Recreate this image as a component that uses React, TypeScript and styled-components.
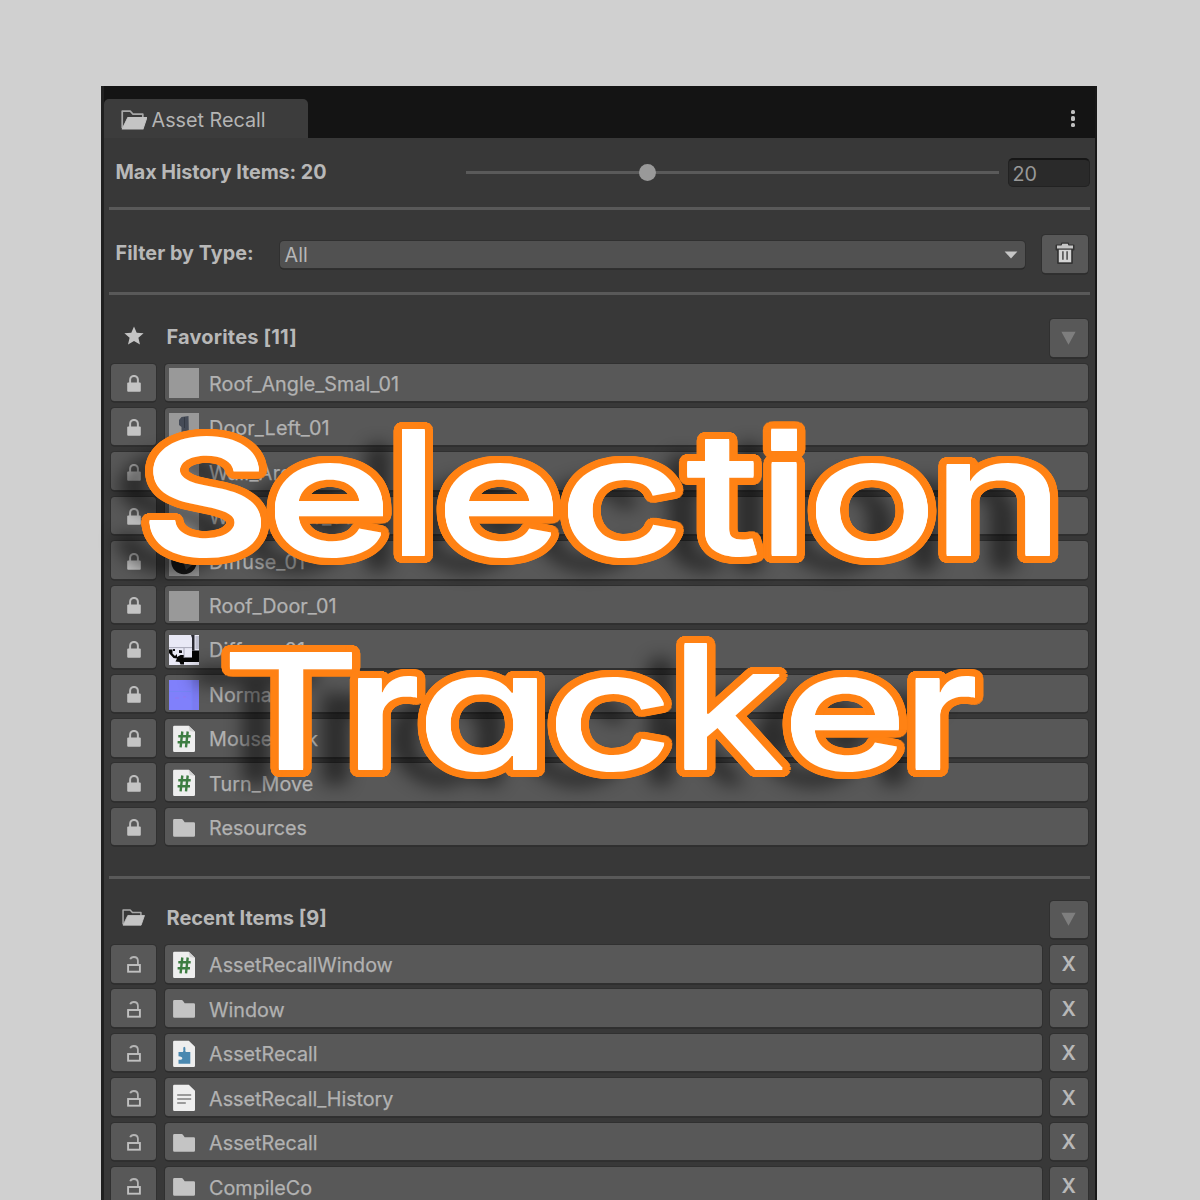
import React from "react";
import styled, { createGlobalStyle } from "styled-components";

const GlobalStyle = createGlobalStyle`
  html, body { margin: 0; padding: 0; }
  body { background: #d0d0d0; }
  *, *::before, *::after { box-sizing: border-box; }
`;

const Stage = styled.main`
  position: relative;
  width: 1200px;
  height: 1200px;
  overflow: hidden;
  padding: 86px 103.5px 0 101px;
  background: #d0d0d0;
  font-family: Inter, "Liberation Sans", sans-serif;
  font-size: 19.75px;
  line-height: 24px;
  color: #b6b6b6;
`;

const Panel = styled.section`
  height: 1130px;
  background: #383838;
  border-left: 3px solid #202020;
  border-right: 2px solid #181818;
`;

const TabBar = styled.header`
  display: flex;
  justify-content: space-between;
  align-items: flex-end;
  height: 52px;
  background: #141414;
`;

const Tab = styled.div`
  display: flex;
  align-items: center;
  gap: 4.5px;
  width: 204px;
  height: 39.5px;
  padding: 3px 0 0 16.5px;
  border-radius: 5px 5px 0 0;
  background: #3c3c3c;
  color: #b4b4b4;
`;

const TabLabel = styled.span`
  letter-spacing: 0;
`;

const MenuDots = styled.div`
  display: flex;
  flex-direction: column;
  gap: 2.2px;
  margin: 0 19.5px 11px 0;
`;

const Dot = styled.i`
  width: 4.2px;
  height: 4.2px;
  border-radius: 1.6px;
  background: #c0c0c0;
`;

const Divider = styled.hr`
  height: 3px;
  margin: 0 4.5px 0 5px;
  border: 0;
  background: #595959;
`;

const SettingRow = styled.div<{ $height: number; $top: number }>`
  display: flex;
  align-items: center;
  height: ${(p) => p.$height}px;
  padding: ${(p) => p.$top}px 7px 0 11.5px;
`;

const Strong = styled.span<{ $width?: number; $tracking?: number }>`
  width: ${(p) => (p.$width ? `${p.$width}px` : "auto")};
  flex: none;
  margin-top: -1px;
  font-weight: 700;
  letter-spacing: ${(p) => p.$tracking ?? 0}px;
  color: #b8b8b8;
  white-space: nowrap;
`;

const Track = styled.div`
  display: flex;
  align-items: center;
  width: 533px;
  height: 3px;
  background: #5a5a5a;
`;

const Thumb = styled.i`
  width: 17px;
  height: 17px;
  margin-left: 172.5px;
  border-radius: 50%;
  background: #999;
`;

const NumberField = styled.div`
  width: 82px;
  height: 29px;
  margin: 0 -2px 0 9px;
  padding: 2px 0 0 4px;
  border: 1px solid #222;
  border-top: 2px solid #161616;
  border-radius: 5px;
  background: #2a2a2a;
  color: #989898;
`;

const Select = styled.div`
  display: flex;
  align-items: center;
  justify-content: space-between;
  width: 745.5px;
  height: 27px;
  margin: 2px 16.5px 0 -0.5px;
  padding: 0 7px 0 4.5px;
  border-radius: 4px;
  background: #515151;
  box-shadow: 0 0 0 1px #303030, 0 1.5px 0 #242424;
`;

const Button = styled.div<{ $width: number; $shift?: number }>`
  display: flex;
  align-items: center;
  justify-content: center;
  flex: none;
  width: ${(p) => p.$width}px;
  height: 37.5px;
  padding-top: ${(p) => p.$shift ?? 0}px;
  border-radius: 3.5px;
  background: #585858;
  box-shadow: 0 0 0 1px #303030, 0 1.5px 0 #262626;
`;

const Group = styled.section<{ $space: number; $top: number }>`
  height: ${(p) => p.$space}px;
  padding: ${(p) => p.$top}px 7px 0 7px;
`;

const GroupHeader = styled.div`
  display: flex;
  align-items: center;
  height: 37.5px;
  margin-bottom: 7px;
`;

const GroupIcon = styled.div`
  display: flex;
  justify-content: center;
  width: 45px;
  margin: -4px 10.5px 0 0;
`;

const GroupTitle = styled(Strong)`
  flex: 1;
  margin-top: -2px;
  font-size: 20px;
`;

const List = styled.div`
  display: flex;
  flex-direction: column;
  gap: 6.95px;
`;

const Row = styled.div`
  display: flex;
  gap: 8.5px;
`;

const Item = styled.div`
  display: flex;
  align-items: center;
  flex: 1;
  height: 37.5px;
  padding: 2.4px 0 0 4px;
  border-radius: 3.5px;
  background: #585858;
  box-shadow: 0 0 0 1px #303030, 0 1.5px 0 #262626;
`;

const Preview = styled.div`
  display: flex;
  align-items: center;
  justify-content: center;
  width: 30.4px;
  height: 30px;
  margin-right: 10.2px;
`;

const ItemName = styled.span<{ $tracking?: number }>`
  margin-top: 0.8px;
  color: #b2b2b2;
  -webkit-text-stroke: 0.25px #b2b2b2;
  letter-spacing: ${(p) => p.$tracking ?? 0}px;
  white-space: nowrap;
`;

const Cross = styled.span`
  font-size: 20px;
  font-weight: 600;
  color: #b8b8b8;
`;

const FolderOpen = ({ width, height }: { width: number; height: number }) => (
  <svg width={width} height={height} viewBox="0 0 26 20" preserveAspectRatio="none">
    <path d="M1.2 18V1.2h8l2.6 3h9.6v3.4" fill="none" stroke="#a8a8a8" strokeWidth="1.7" strokeLinejoin="round" />
    <path d="M6.6 7.6H25.4L21.6 19H1.2z" fill="#c4c4c4" stroke="#c4c4c4" strokeWidth="1" strokeLinejoin="round" />
  </svg>
);

const Star = () => (
  <svg width="20" height="19" viewBox="0 0 20 19">
    <path d="M10 .4l2.7 6.3 6.9.6-5.2 4.5 1.6 6.7-6-3.6-6 3.6 1.6-6.7L.4 7.3l6.9-.6z" fill="#c4c4c4" />
  </svg>
);

const Lock = () => (
  <svg width="14" height="17" viewBox="0 0 14 17">
    <path d="M3.1 8V4.8a3.9 3.9 0 0 1 7.8 0V8" fill="none" stroke="#bcbcbc" strokeWidth="2" />
    <rect x="0.2" y="7.4" width="13.6" height="9.3" rx="1" fill="#c4c4c4" />
  </svg>
);

const Unlock = () => (
  <svg width="14" height="17" viewBox="0 0 14 17">
    <path d="M3.2 3.3C3.7 1.7 5 1 6.9 1c2.7 0 4 1.4 4 3.8V9" fill="none" stroke="#b4b4b4" strokeWidth="1.8" />
    <rect x="1.1" y="9" width="11.8" height="6.7" fill="none" stroke="#c0c0c0" strokeWidth="1.9" />
  </svg>
);

const Trash = () => (
  <svg width="22" height="23" viewBox="0 0 22 23">
    <path d="M8 1.5h6v2h5.5v4h-1.6v13.5H4.1V7.5H2.5v-4H8z" fill="#333" stroke="#333" strokeWidth="2" strokeLinejoin="round" />
    <path d="M8.3 1.8h5.4l.8 1.7h4.5v3H3v-3h4.500z" fill="#c6c6c6" />
    <path d="M4.800 7.700h12.400v12.600H4.800z" fill="#d4d4d4" />
    <path d="M8.900 9.300v8.400M13.100 9.300v8.400" stroke="#505050" strokeWidth="1.6" />
  </svg>
);

const Caret = () => (
  <svg width="14" height="8" viewBox="0 0 14 8">
    <path d="M.6.4h12.800L7 7.600z" fill="#c6c6c6" />
  </svg>
);

const Triangle = () => (
  <svg width="15" height="14" viewBox="0 0 15 14">
    <path d="M.4 .7h14.200L7.500 13.700z" fill="#7e7e7e" />
  </svg>
);

const Folder = () => (
  <svg width="24" height="20" viewBox="0 0 24 20">
    <path d="M2.400 1h7.200q.8 0 1.300.7l1.800 2.500h9q1.300 0 1.300 1.300v12q0 1.300-1.300 1.300H2.400q-1.300 0-1.300-1.300V2.300Q1.100 1 2.400 1z" fill="#c4c4c4" />
  </svg>
);

const pagePath = "M2.300.8h14.500l6.200 6v19q0 1.200-1.200 1.200H2.300q-1.200 0-1.200-1.200V2q0-1.200 1.200-1.200z";

const ScriptFile = () => (
  <svg width="24" height="28" viewBox="0 0 24 28">
    <path d={pagePath} fill="#eee" />
    <path d="M16.600.8l6.400 6.200-5.400-1z" fill="#d2d2d2" />
    <path d="M10.300 6.500L8.600 22.300M15.700 6.500L14 22.300M6.300 11.300h12.400M5.600 17.300H18" stroke="#3d7d42" strokeWidth="2.4" fill="none" />
  </svg>
);

const AssemblyFile = () => (
  <svg width="24" height="28" viewBox="0 0 24 28">
    <path d={pagePath} fill="#eee" />
    <path d="M6.500 12h4.300q1-.7.500-2.600-.4-2.600 1-2.600t1.100 2.600q-.5 1.900.5 2.600h4.400v11.400q0 .4-.4.400H6.500v-4q3.800.2 3.800-1.500T6.500 16.200z" fill="#4a88b0" />
  </svg>
);

const TextFile = () => (
  <svg width="24" height="28" viewBox="0 0 24 28">
    <path d={pagePath} fill="#eee" />
    <path d="M5.200 11h14M5.200 15h14M5.200 19h8.600" stroke="#808080" strokeWidth="1.6" />
  </svg>
);

const Mesh = () => (
  <svg width="30" height="30" viewBox="0 0 30 30"><path d="M0 0h30v30H0z" fill="#999" /></svg>
);

const DoorMesh = () => (
  <svg width="30" height="30" viewBox="0 0 30 30">
    <path d="M0 0h30v30H0z" fill="#999" />
    <path d="M12.500 4l7-1 .5 23-7.500 1V14l-2.500-2V7z" fill="#454b57" />
    <path d="M15.500 4v11" stroke="#343a44" />
  </svg>
);

const Sphere = () => (
  <svg width="30" height="30" viewBox="0 0 30 30">
    <path d="M0 0h30v30H0z" fill="#999" />
    <circle cx="15" cy="15.500" r="12.800" fill="#161616" />
    <path d="M15 18l7-3 1 4-6 5z" fill="#3a3a3a" />
  </svg>
);

const Atlas = () => (
  <svg width="30" height="30" viewBox="0 0 30 30">
    <path d="M0 0h30v30H0z" fill="#e9e9f6" />
    <path d="M0 14.500h3.500v4l2.500 2.500 2-2v3l3.500-2h3.500v2.500h8V15.500h7V27H15v2.500h-3.500l-1-2.500-4-.5 1.500-3-3.500-.5L0 18z" fill="#050505" />
    <path d="M10 15l3 .5v2.500h-3zM4 14h2v2H4z" fill="#15151a" />
    <path d="M0 12.600h23M15 13v10" stroke="#9898a8" strokeWidth=".8" />
    <path d="M22 0h3.500v15.500H23V3z" fill="#2a2a32" />
    <path d="M26.500 1H30v13h-3.500z" fill="#bfc0d0" />
  </svg>
);

const NormalMap = () => (
  <svg width="30" height="30" viewBox="0 0 30 30">
    <path d="M0 0h30v30H0z" fill="#8080fb" />
    <path d="M0 11.500h22M23 0v30" stroke="#7684f4" />
    <path d="M23.500 0H30v30h-6.500z" fill="#7b7bf2" />
    <path d="M6 18h4M14 17h3" stroke="#9176ee" />
  </svg>
);

type Entry = { name: string; icon: React.ReactNode; tracking?: number };

const favorites: Entry[] = [
  { name: "Roof_Angle_Smal_01", icon: <Mesh />, tracking: 0.04 },
  { name: "Door_Left_01", icon: <DoorMesh />, tracking: 0.1 },
  { name: "Wall_Arch_01", icon: <Mesh />, tracking: 0.3 },
  { name: "Wall_Corner_01", icon: <Mesh />, tracking: 0.1 },
  { name: "Diffuse_01", icon: <Sphere />, tracking: 0.1 },
  { name: "Roof_Door_01", icon: <Mesh />, tracking: 0.06 },
  { name: "Diffuse_01", icon: <Atlas />, tracking: 0.1 },
  { name: "Normal_01", icon: <NormalMap /> },
  { name: "MouseLook", icon: <ScriptFile /> },
  { name: "Turn_Move", icon: <ScriptFile />, tracking: 0.08 },
  { name: "Resources", icon: <Folder />, tracking: -0.05 },
];

const recents: Entry[] = [
  { name: "AssetRecallWindow", icon: <ScriptFile />, tracking: -0.03 },
  { name: "Window", icon: <Folder /> },
  { name: "AssetRecall", icon: <AssemblyFile /> },
  { name: "AssetRecall_History", icon: <TextFile />, tracking: -0.04 },
  { name: "AssetRecall", icon: <Folder /> },
  { name: "CompileCo", icon: <Folder /> },
];

/* Title lettering: a widened grotesque with a round outline of even thickness. */
const OUTLINE = 8.4;

const outline = (scale: number) => {
  const ring = Array.from({ length: 40 }, (_, i) => {
    const a = (i / 40) * Math.PI * 2;
    return `${((Math.cos(a) * OUTLINE) / scale).toFixed(2)}px ${(Math.sin(a) * OUTLINE).toFixed(2)}px 0 #ff8214`;
  });
  return ["0 0.9px 0 #fff", "0 -0.9px 0 #fff", ...ring].join(", ");
};

const Title = styled.h1`
  position: absolute;
  top: 406px;
  left: 0;
  margin: 0;
  color: #fff;
  font-feature-settings: "cv11", "ss07";
`;

/* The cast shadow is that of the bare letters, without their outline. */
const FilterDefs = styled.svg`
  position: absolute;
  width: 0;
  height: 0;
`;

const CastShadow = () => (
  <FilterDefs>
    <filter id="cast" x="-10%" y="-20%" width="120%" height="150%" colorInterpolationFilters="sRGB">
      <feMorphology in="SourceAlpha" operator="erode" radius="7" />
      <feGaussianBlur stdDeviation="8.5" />
      <feOffset dx="-35" dy="15" />
      <feComponentTransfer result="shade"><feFuncA type="linear" slope="0.5" /></feComponentTransfer>
      <feMerge>
        <feMergeNode in="shade" />
        <feMergeNode in="SourceGraphic" />
      </feMerge>
    </filter>
  </FilterDefs>
);

const Word = styled.span<{ $left: number }>`
  display: flex;
  align-items: baseline;
  height: 214.3px;
  padding-left: ${(p) => p.$left}px;
  filter: url(#cast);
`;

const Letter = styled.span<{ $slot: number; $size: number; $weight: number; $scale: number; $bearing: number }>`
  flex: none;
  width: ${(p) => p.$slot}px;
  font-size: ${(p) => p.$size}px;
  font-weight: ${(p) => p.$weight};
  line-height: 1;
  transform-origin: 0 0;
  transform: translateX(${(p) => -p.$bearing * p.$scale}px) scaleX(${(p) => p.$scale});
  text-shadow: ${(p) => outline(p.$scale)};
`;

type Glyph = { ch: string; slot: number; size: number; weight: number; width: number; ink: [number, number] };

const selection: Glyph[] = [
  { ch: "S", slot: 125.3, size: 160.5, weight: 560, width: 112.3, ink: [7, 97] },
  { ch: "e", slot: 127.7, size: 165.5, weight: 500, width: 109.5, ink: [6.7, 87] },
  { ch: "l", slot: 42.8, size: 172, weight: 600, width: 23, ink: [10.8, 31.4] },
  { ch: "e", slot: 122.2, size: 165.5, weight: 500, width: 109.3, ink: [6.7, 87] },
  { ch: "c", slot: 121.5, size: 165.5, weight: 500, width: 110, ink: [6.7, 86] },
  { ch: "t", slot: 82.3, size: 170, weight: 500, width: 71, ink: [2, 53] },
  { ch: "i", slot: 44.2, size: 169, weight: 600, width: 27.5, ink: [9.3, 32] },
  { ch: "o", slot: 131.3, size: 165.5, weight: 500, width: 114.5, ink: [6.7, 90.3] },
  { ch: "n", slot: 110, size: 165.5, weight: 500, width: 107, ink: [11, 87] },
];

const tracker: Glyph[] = [
  { ch: "T", slot: 129.3, size: 159.5, weight: 520, width: 125, ink: [6.3, 99] },
  { ch: "r", slot: 67.2, size: 165.5, weight: 560, width: 59, ink: [10.6, 60.5] },
  { ch: "a", slot: 130, size: 165.5, weight: 500, width: 114, ink: [6.7, 89] },
  { ch: "c", slot: 129, size: 165.5, weight: 500, width: 110.5, ink: [6.7, 86] },
  { ch: "k", slot: 105.3, size: 172, weight: 520, width: 101, ink: [11, 89.5] },
  { ch: "e", slot: 126, size: 165.5, weight: 500, width: 109, ink: [6.7, 87] },
  { ch: "r", slot: 64, size: 165.5, weight: 560, width: 59, ink: [11, 60.5] },
];

const Lettering = ({ left, glyphs }: { left: number; glyphs: Glyph[] }) => (
  <Word $left={left}>
    {glyphs.map((g, i) => {
      const k = g.size / 160;
      return (
        <Letter
          key={i}
          $slot={g.slot}
          $size={g.size}
          $weight={g.weight}
          $scale={g.width / ((g.ink[1] - g.ink[0]) * k)}
          $bearing={g.ink[0] * k}
        >
          {g.ch}
        </Letter>
      );
    })}
  </Word>
);

export default function App() {
  return (
    <Stage>
      <GlobalStyle />
      <Panel>
        <TabBar>
          <Tab>
            <FolderOpen width={26.5} height={20} />
            <TabLabel>Asset Recall</TabLabel>
          </Tab>
          <MenuDots><Dot /><Dot /><Dot /></MenuDots>
        </TabBar>

        <SettingRow $height={69} $top={0.5}>
          <Strong $width={350.5} $tracking={-0.05}>Max History Items: 20</Strong>
          <Track><Thumb /></Track>
          <NumberField>20</NumberField>
        </SettingRow>
        <Divider />
        <SettingRow $height={81.5} $top={6}>
          <Strong $width={165} $tracking={0.05}>Filter by Type:</Strong>
          <Select>
            All
            <Caret />
          </Select>
          <Button $width={46}><Trash /></Button>
        </SettingRow>
        <Divider />

        <Group $space={581} $top={24.5}>
          <GroupHeader>
            <GroupIcon><Star /></GroupIcon>
            <GroupTitle $tracking={0.18}>Favorites [11]</GroupTitle>
            <Button $width={37.5}><Triangle /></Button>
          </GroupHeader>
          <List>
            {favorites.map((f, i) => (
              <Row key={i}>
                <Button $width={45} $shift={2}><Lock /></Button>
                <Item>
                  <Preview>{f.icon}</Preview>
                  <ItemName $tracking={f.tracking}>{f.name}</ItemName>
                </Item>
              </Row>
            ))}
          </List>
        </Group>
        <Divider />

        <Group $space={330} $top={22}>
          <GroupHeader>
            <GroupIcon><FolderOpen width={23} height={17} /></GroupIcon>
            <GroupTitle>Recent Items [9]</GroupTitle>
            <Button $width={37.5}><Triangle /></Button>
          </GroupHeader>
          <List>
            {recents.map((r, i) => (
              <Row key={i}>
                <Button $width={45} $shift={2}><Unlock /></Button>
                <Item>
                  <Preview>{r.icon}</Preview>
                  <ItemName $tracking={r.tracking}>{r.name}</ItemName>
                </Item>
                <Button $width={37.5} $shift={1}><Cross>X</Cross></Button>
              </Row>
            ))}
          </List>
        </Group>
      </Panel>

      <CastShadow />
      <Title>
        <Lettering left={148.7} glyphs={selection} />
        <Lettering left={229} glyphs={tracker} />
      </Title>
    </Stage>
  );
}
